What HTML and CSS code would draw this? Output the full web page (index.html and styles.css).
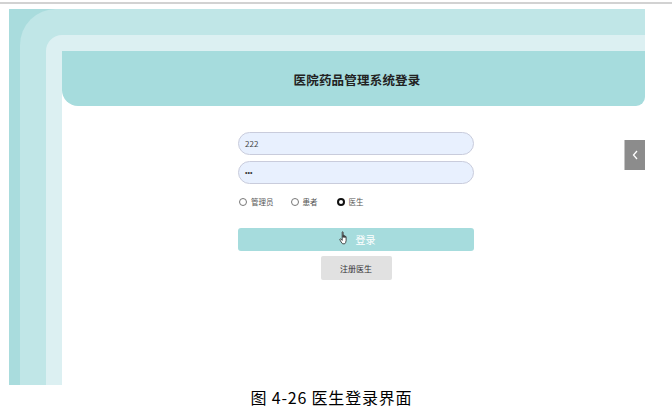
FILE: index.html
```html
<!DOCTYPE html>
<html lang="zh">
<head>
<meta charset="utf-8">
<link rel="stylesheet" href="styles.css">
</head>
<body>
<div class="topline"></div>
<div class="frame">
  <div class="band1">
    <div class="band2">
      <div class="page">
        <div class="header">医院药品管理系统登录</div>
        <form class="form">
          <div class="input">222</div>
          <div class="input pw">•••</div>
          <div class="radios">
            <span class="radio"></span><span class="rlabel first">管理员</span>
            <span class="radio"></span><span class="rlabel second">患者</span>
            <span class="radio on"></span><span class="rlabel">医生</span>
          </div>
          <div class="login">
            <svg class="hand" width="11" height="14" viewBox="0 0 11 14"><path d="M3.2 1.2c0-.6.9-.6.9 0v5.2l.1-1.8c0-.6.9-.6.9 0v1.8l.1-1.2c0-.6.9-.6.9 0v1.4l.1-.8c0-.6.9-.6.9 0v3.8c0 1.4-.8 2.6-1.4 3.2H3.6C2.8 12 1.5 10.2 .9 8.7c-.3-.7.4-1.2.9-.7l1.4 1.4z" fill="#fff" stroke="#222" stroke-width=".8" stroke-linejoin="round"/></svg>
            <span>登录</span>
          </div>
          <div class="register">注册医生</div>
        </form>
        <div class="tab"><svg width="8" height="12" viewBox="0 0 8 12"><path d="M6 2L2.5 6 6 10" fill="none" stroke="#fff" stroke-width="1.3"/></svg></div>
      </div>
    </div>
  </div>
</div>
<div class="caption">图 4-26 医生登录界面</div>
</body>
</html>
```
FILE: styles.css
```css
* { box-sizing: border-box; }
html, body { margin: 0; padding: 0; background: #fff; }
body { width: 672px; height: 409px; overflow: hidden; font-family: "Noto Sans CJK SC", "Noto Sans", sans-serif; }
.topline { margin-top: 2px; height: 2px; background: #d2d2d2; }
.frame { margin: 5px 0 0 9px; width: 636px; height: 376px; background: #a9dcdd; padding-left: 11px; display: flex; }
.band1 { flex: 1; display: flex; background: #c0e6e7; border-top-left-radius: 36px; padding: 26px 0 0 26px; }
.band2 { flex: 1; display: flex; background: #dcf0f2; border-top-left-radius: 16px; padding: 16px 0 0 16px; }
.page { flex: 1; background: #fff; position: relative; display: flex; flex-direction: column; }
.header { height: 55px; background: #a6dcdd; border-radius: 0 0 9px 16px; display: flex; align-items: center; justify-content: center; padding-left: 7px; padding-top: 2px; font-size: 12.5px; font-weight: 700; color: #222; letter-spacing: 0.2px; }
.form { margin: 26px 0 0 176px; width: 236px; display: flex; flex-direction: column; }
.input { height: 23px; border: 1px solid #c9ccdc; border-radius: 12px; background: #e8f0fe; font-size: 8px; color: #444; padding-left: 6px; display: flex; align-items: center; }
.input.pw { margin-top: 6px; font-family: "Liberation Sans", sans-serif; font-size: 7px; letter-spacing: 0; color: #333; }
.radios { margin-top: 13px; height: 9px; display: flex; align-items: center; font-size: 7.5px; color: #555; }
.radio { width: 8px; height: 8px; border: 1px solid #777; border-radius: 50%; margin-left: 1px; margin-right: 4px; }
.radio.on { border: 2.5px solid #111; background: #fff; }
.rlabel.first { margin-right: 16px; }
.rlabel.second { margin-right: 18px; }
.login { margin-top: 22px; height: 23px; background: #a6dcdd; border-radius: 3px; display: flex; align-items: center; justify-content: center; gap: 6px; padding-left: 2px; color: #fff; font-size: 10px; }
.hand { margin-top: -3px; }
.register { margin: 5px auto 0; width: 71px; height: 24px; background: #e1e1e1; border-radius: 2px; display: flex; align-items: center; justify-content: center; font-size: 8px; color: #333; }
.tab { position: absolute; right: 0; top: 89px; width: 21px; height: 30px; background: #8c8c8c; border-left: 1px solid #c4c4c4; display: flex; align-items: center; justify-content: center; }
.caption { height: 24px; line-height: 24px; text-align: center; padding-right: 9px; font-size: 16px; letter-spacing: 0.8px; color: #000; }
```
